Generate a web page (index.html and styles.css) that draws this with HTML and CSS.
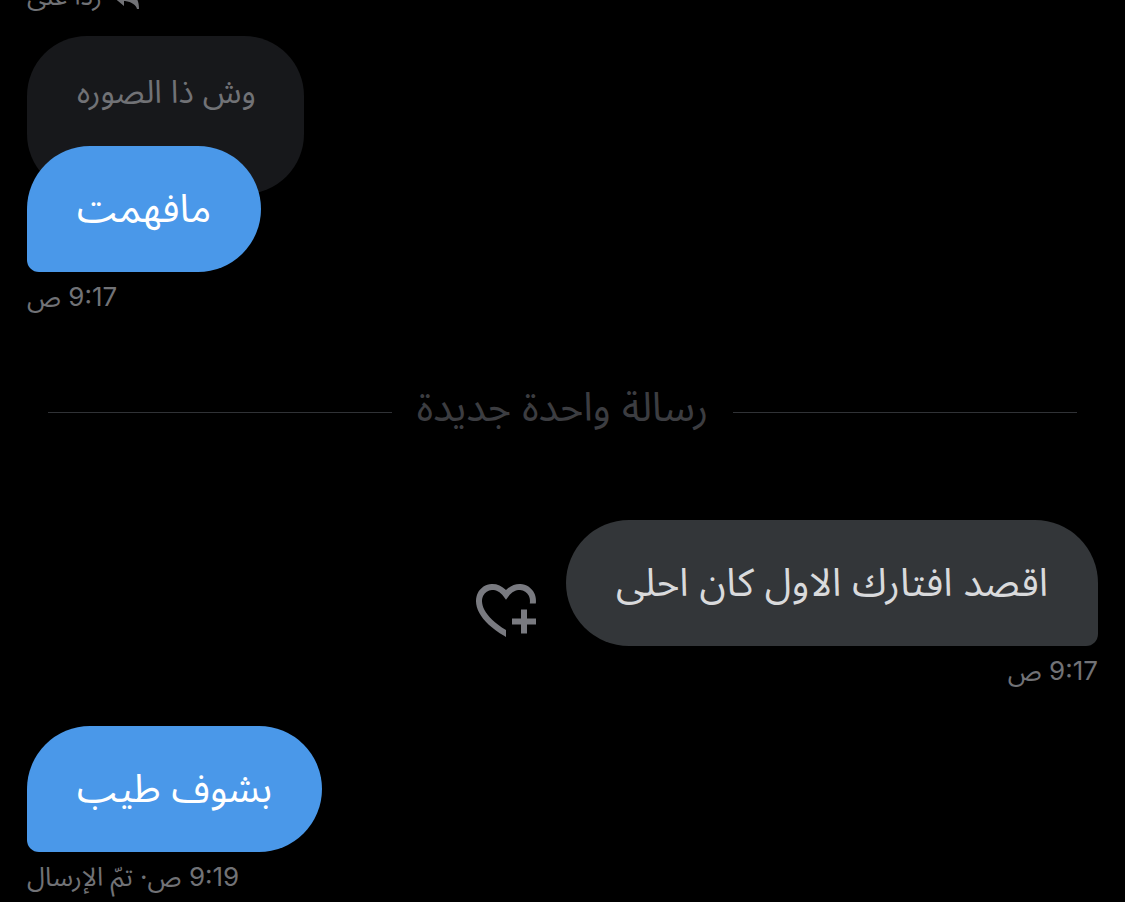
FILE: index.html
```html
<!DOCTYPE html>
<html lang="ar" dir="rtl">
<head>
<meta charset="utf-8">
<meta name="viewport" content="width=device-width, initial-scale=1">
<title>الرسائل</title>
<link rel="stylesheet" href="styles.css">
</head>
<body>
<main class="chat">
  <article class="message sent">
    <div class="reply-label">
      <svg class="reply-icon" viewBox="0 0 28 28" aria-hidden="true"><path d="M0 14 12 4v6c10 0 15 6 15 17h-2c-1-4-5-7-12-8l-1 0v5z"/></svg>
      <span>ردًا على</span>
    </div>
    <blockquote class="quote">وش ذا الصوره</blockquote>
    <p class="bubble">مافهمت</p>
    <p class="meta">9:17 ص</p>
  </article>
  <div class="divider"><span>رسالة واحدة جديدة</span></div>
  <article class="message received">
    <div class="row">
      <p class="bubble">اقصد افتارك الاول كان احلى</p>
      <button class="react" type="button" aria-label="إضافة تفاعل">
        <svg viewBox="2 3.5 20 18" aria-hidden="true">
          <path d="M17 12v3h-2.998v2h3v3h2v-3h3v-2h-3.001v-3H17zm-5 6.839c-3.871-2.34-6.053-4.639-7.127-6.609-1.112-2.04-1.031-3.7-.479-4.82.561-1.13 1.667-1.84 2.91-1.91 1.222-.06 2.68.51 3.892 2.16l.806 1.09.805-1.09c1.211-1.65 2.668-2.22 3.89-2.16 1.242.07 2.347.78 2.908 1.91.334.677.49 1.554.321 2.59h2.011c.153-1.283-.039-2.469-.539-3.48-.887-1.79-2.647-2.91-4.601-3.01-1.65-.09-3.367.56-4.796 2.01-1.43-1.45-3.147-2.1-4.798-2.01-1.954.1-3.714 1.22-4.601 3.01-.896 1.81-.846 4.17.514 6.67 1.353 2.48 4.003 5.12 8.382 7.67l.502.299v-2.32z"/>
        </svg>
      </button>
    </div>
    <p class="meta">9:17 ص</p>
  </article>
  <article class="message sent">
    <p class="bubble">بشوف طيب</p>
    <p class="meta">9:19 ص· تمّ الإرسال</p>
  </article>
</main>
</body>
</html>
```
FILE: styles.css
```css
* {
  box-sizing: border-box;
}

body {
  margin: 0;
  background: #000;
  color: #717276;
  font-family: Inter, "Noto Sans Arabic", "DejaVu Sans", sans-serif;
}

p,
blockquote {
  margin: 0;
}

.chat {
  display: flex;
  flex-direction: column;
  justify-content: flex-end;
  gap: 30px;
  height: 100vh;
  padding: 0 27px;
  overflow: hidden;
}

.message {
  display: flex;
  flex-direction: column;
  flex-shrink: 0;
}

.sent {
  align-items: flex-end;
}

.received {
  align-items: flex-start;
}

.reply-label {
  display: flex;
  align-items: center;
  gap: 10px;
  margin-bottom: 20px;
  font-size: 26px;
  line-height: 40px;
}

.reply-icon {
  width: 28px;
  height: 28px;
  fill: #717276;
}

.quote {
  padding: 32px 48px 78px 50px;
  border-radius: 60px;
  background: #17181b;
  color: #717276;
  font-size: 32px;
  line-height: 48px;
}

.quote + .bubble {
  margin-top: -48px;
}

.bubble {
  padding: 35px 50px 37px;
  border-radius: 63px;
  font-size: 39px;
  line-height: 54px;
}

.sent .bubble {
  border-bottom-left-radius: 12px;
  background: #4a98e9;
  color: #fff;
}

.received .bubble {
  border-bottom-right-radius: 12px;
  background: #333639;
  color: #d9dadc;
}

.meta {
  padding: 5px 0;
  font-size: 26px;
  line-height: 40px;
}

.row {
  display: flex;
  align-items: flex-end;
  gap: 30px;
}

.react {
  padding: 0;
  border: 0;
  margin-bottom: 8px;
  background: none;
}

.react svg {
  display: block;
  width: 60px;
  height: 54px;
  fill: #797a80;
}

.divider {
  display: flex;
  flex-shrink: 0;
  align-items: center;
  gap: 25px;
  padding: 31px 21px 49px;
  color: #3c3d41;
  font-size: 40px;
  line-height: 48px;
}

.divider span {
  padding-bottom: 10px;
}

.divider::before,
.divider::after {
  flex: 1;
  height: 1px;
  background: #303236;
  content: "";
}
```
